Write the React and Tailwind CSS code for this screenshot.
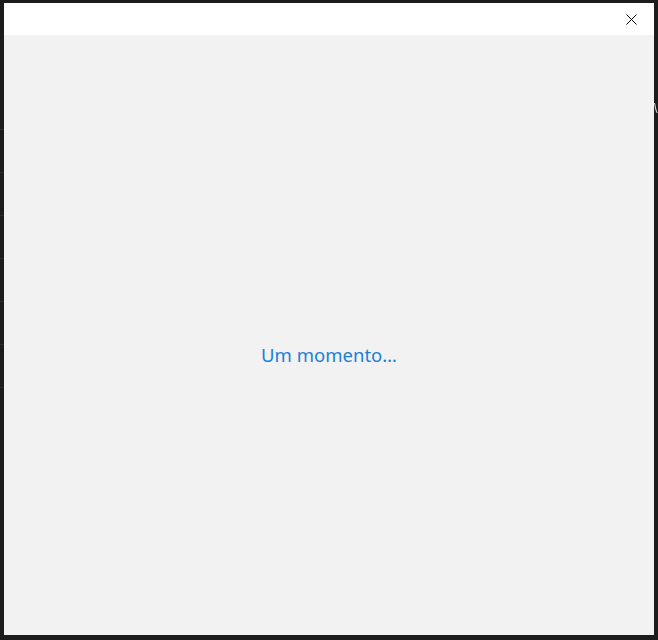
export default function App() {
  const lines = [129, 172, 215, 258, 301, 344, 387];
  return (
    <div className="relative w-[658px] h-[640px] bg-[#1c1c1c] pt-[3px] pl-[4px] pr-[4px] pb-[5px] flex flex-col">
      {lines.map((y) => (
        <div key={y} className="absolute left-0 w-[4px] h-px bg-[#2e2e2e]" style={{ top: y }} />
      ))}
      <svg className="absolute left-[654px] top-[101px]" width="4" height="14" viewBox="0 0 4 14" fill="none" stroke="#e6e6e6" strokeWidth="1">
        <path d="M0.5 2 L1.5 7 L2.5 11 L3.5 12" />
      </svg>
      <div className="h-[32px] bg-white flex justify-end">
        <div className="w-[46px] h-full flex items-center justify-center">
          <svg width="11" height="11" viewBox="0 0 11 11" fill="none" stroke="#000" strokeWidth="1">
            <path d="M0.5 0.5 L10.5 10.5 M10.5 0.5 L0.5 10.5" />
          </svg>
        </div>
      </div>
      <div className="flex-1 bg-[#f2f2f2] flex items-center justify-center pt-[40px]">
        <span className="text-[18.5px] leading-[24px] text-[#1a7fd9]" style={{ fontFamily: '"Noto Sans", sans-serif' }}>
          Um momento…
        </span>
      </div>
    </div>
  );
}
